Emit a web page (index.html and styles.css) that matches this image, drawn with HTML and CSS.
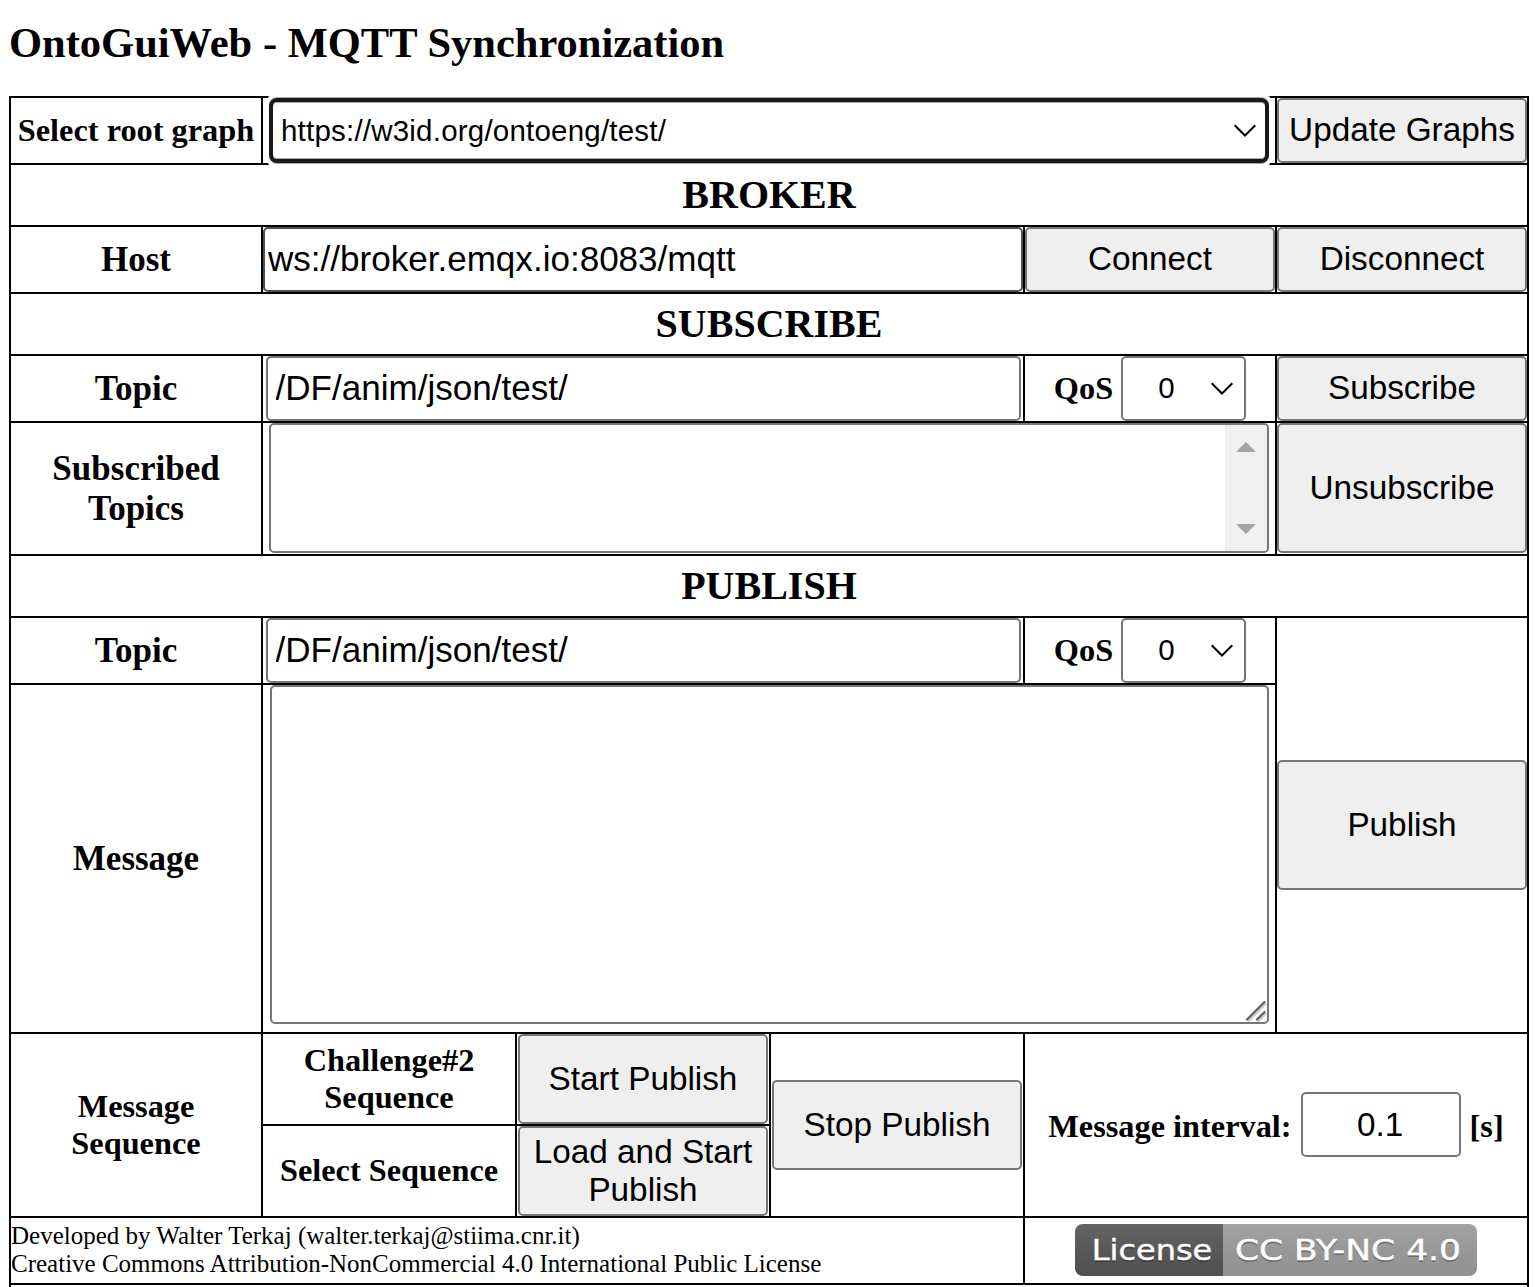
FILE: index.html
```html
<!DOCTYPE html>
<html lang="en">
<head>
<meta charset="utf-8">
<title>OntoGuiWeb - MQTT Synchronization</title>
<link rel="stylesheet" href="styles.css">
</head>
<body>
<h1 class="title"><span>OntoGuiWeb - MQTT Synchronization</span></h1>
<main class="panel">
  <div class="cell label small t-root">Select root graph</div>
  <div class="cell span4">
    <div class="focus-halo">
      <div class="select root-select">
        <span class="value">https://w3id.org/ontoeng/test/</span>
        <svg class="chevron" viewBox="0 0 24 14"><path d="M1.7 1.2 12 11.5 22.3 1.2"/></svg>
      </div>
    </div>
  </div>
  <div class="cell"><button class="btn">Update Graphs</button></div>

  <h2 class="cell section">BROKER</h2>

  <div class="cell label">Host</div>
  <div class="cell span3"><input class="field host" value="ws://broker.emqx.io:8083/mqtt"></div>
  <div class="cell"><button class="btn">Connect</button></div>
  <div class="cell"><button class="btn">Disconnect</button></div>

  <h2 class="cell section">SUBSCRIBE</h2>

  <div class="cell label">Topic</div>
  <div class="cell span3"><input class="field topic" value="/DF/anim/json/test/"></div>
  <div class="cell label small qos">QoS
    <div class="select qos-select"><span class="value">0</span>
      <svg class="chevron" viewBox="0 0 24 14"><path d="M1.7 1.2 12 11.5 22.3 1.2"/></svg>
    </div>
  </div>
  <div class="cell"><button class="btn">Subscribe</button></div>

  <div class="cell label">Subscribed<br>Topics</div>
  <div class="cell span4 top">
    <div class="listbox">
      <div class="scrollbar">
        <svg class="arrow" viewBox="0 0 20 10"><path d="M10 0 20 10H0z"/></svg>
        <svg class="arrow" viewBox="0 0 20 10"><path d="M0 0H20L10 10z"/></svg>
      </div>
    </div>
  </div>
  <div class="cell top"><button class="btn tall">Unsubscribe</button></div>

  <h2 class="cell section">PUBLISH</h2>

  <div class="cell label">Topic</div>
  <div class="cell span3"><input class="field topic" value="/DF/anim/json/test/"></div>
  <div class="cell label small qos">QoS
    <div class="select qos-select"><span class="value">0</span>
      <svg class="chevron" viewBox="0 0 24 14"><path d="M1.7 1.2 12 11.5 22.3 1.2"/></svg>
    </div>
  </div>
  <div class="cell rows2"><button class="btn tall">Publish</button></div>

  <div class="cell label">Message</div>
  <div class="cell span4 top">
    <div class="message-box">
      <textarea class="message"></textarea>
      <svg class="grip" viewBox="0 0 22 22"><path class="shade" d="M3.5 21 20.5 4M13.5 21 20.5 14"/><path d="M2 19.5 19.5 2M12 19.5 19.5 12"/></svg>
    </div>
  </div>

  <div class="cell label small rows2">Message<br>Sequence</div>
  <div class="cell label small">Challenge#2<br>Sequence</div>
  <div class="cell"><button class="btn medium">Start Publish</button></div>
  <div class="cell rows2"><button class="btn medium">Stop Publish</button></div>
  <div class="cell label small rows2 span2 interval">
    <span class="caption">Message interval:</span><input class="field seconds" value="0.1"><span class="caption">[s]</span>
  </div>
  <div class="cell label small last">Select Sequence</div>
  <div class="cell"><button class="btn medium">Load and Start<br>Publish</button></div>

  <div class="cell credits"><p>Developed by Walter Terkaj (walter.terkaj@stiima.cnr.it)<br>Creative Commons Attribution-NonCommercial 4.0 International Public License</p></div>
  <div class="cell span2 license">
    <svg class="badge" viewBox="0 0 402 52" role="img" aria-label="License: CC BY-NC 4.0">
      <defs>
        <linearGradient id="shine" x2="0" y2="1"><stop offset="0" stop-color="#bbb" stop-opacity=".13"/><stop offset="1" stop-opacity=".08"/></linearGradient>
        <clipPath id="round"><rect width="402" height="52" rx="8"/></clipPath>
      </defs>
      <g clip-path="url(#round)">
        <rect width="148" height="52" fill="#585858"/>
        <rect x="148" width="254" height="52" fill="#9f9f9f"/>
        <rect width="402" height="52" fill="url(#shine)"/>
      </g>
      <g class="badge-shadow">
        <text x="16.8" y="38" textLength="120.5" lengthAdjust="spacingAndGlyphs">License</text>
        <text x="160" y="38" textLength="226" lengthAdjust="spacingAndGlyphs">CC BY-NC 4.0</text>
      </g>
      <g class="badge-text">
        <text x="16.8" y="35.5" textLength="120.5" lengthAdjust="spacingAndGlyphs">License</text>
        <text x="160" y="35.5" textLength="226" lengthAdjust="spacingAndGlyphs">CC BY-NC 4.0</text>
      </g>
    </svg>
  </div>
  <div class="cell span6"></div>
</main>
</body>
</html>
```
FILE: styles.css
```css
* { box-sizing: border-box; }

body {
  margin: 0;
  height: 1287px;
  overflow: hidden;
  background: #fff;
  color: #000;
  font-family: "Liberation Serif", "Times New Roman", serif;
}

.title {
  margin: 0;
  height: 96px;
  padding: 19px 0 0 9px;
  font-size: 42.5px;
  line-height: 48px;
  white-space: nowrap;
}

/* The 2px gaps let the black background show through as cell rules. */
.panel {
  display: grid;
  grid-template-columns: 250px 252px 252px 252px 250px 250px;
  grid-template-rows: 65px 60px 65px 60px 65px 131px 60px 65px 347px 90px 90px 65px 40px;
  gap: 2px;
  width: 1520px;
  margin-left: 9px;
  padding: 2px;
  background: #000;
}

.cell {
  display: flex;
  align-items: center;
  justify-content: center;
  min-width: 0;
  min-height: 0;
  background: #fff;
}

.top { align-items: flex-start; }
.span2 { grid-column: span 2; }
.span3 { grid-column: span 3; }
.span4 { grid-column: span 4; }
.span6 { grid-column: span 6; }
.rows2 { grid-row: span 2; }

.label {
  font-size: 35px;
  font-weight: bold;
  line-height: 40px;
  text-align: center;
}
.small { font-size: 32.35px; line-height: 37px; }
.last { padding-bottom: 2px; }
.t-root { white-space: nowrap; }

.section {
  grid-column: span 6;
  margin: 0;
  font-size: 40px;
  line-height: 46px;
}

.btn {
  width: 250px;
  height: 65px;
  padding: 0 0 2px;
  border: 2px solid #767676;
  border-radius: 5px;
  background: #efefef;
  color: #000;
  font-family: "Liberation Sans", Arial, sans-serif;
  font-size: 33.3px;
  line-height: 38px;
  white-space: nowrap;
}
.tall { height: 130px; padding-bottom: 0; }
.medium { height: 90px; padding-bottom: 0; }

.field {
  height: 65px;
  border: 2px solid #767676;
  border-radius: 5px;
  background: #fff;
  color: #000;
  font-family: "Liberation Sans", Arial, sans-serif;
  font-size: 35.05px;
}
.host { width: 760px; padding: 0 3px 2px; border-color: #505050; }
.topic { width: 755px; margin-left: 1px; padding: 0 7.5px 2px; }

.select {
  display: flex;
  align-items: center;
  height: 65px;
  border: 2px solid #767676;
  border-radius: 5px;
  background: #fff;
  font-family: "Liberation Sans", Arial, sans-serif;
  font-size: 29.5px;
  font-weight: normal;
}
.focus-halo {
  flex: none;
  width: 1002px;
  margin: -2px 0;
  padding: 2px 1px;
  border-radius: 2px;
  background: #fff;
}
.root-select {
  justify-content: space-between;
  width: 1000px;
  padding: 0 8px 0 8px;
  border: 4px solid #191919;
  border-radius: 8px;
  box-shadow: inset 0 1px 0 #aaa, inset 0 -1px 0 #aaa, 0 1px 0 #aaa, 0 -1px 0 #aaa;
  letter-spacing: .21px;
}
.qos { gap: 8px; }
.qos-select { width: 125px; padding: 0 10px 0 35px; justify-content: space-between; }
.qos-select .value { padding-bottom: 2px; }

.chevron { width: 24px; height: 14px; fill: none; stroke: #000; stroke-width: 2; }

.listbox {
  display: flex;
  justify-content: flex-end;
  width: 1000px;
  height: 130px;
  border: 2px solid #767676;
  border-radius: 5px;
  overflow: hidden;
}
.scrollbar {
  display: flex;
  flex-direction: column;
  align-items: center;
  justify-content: space-between;
  width: 42px;
  padding: 17px 0 17px;
  background: #f0f0f0;
}
.arrow { width: 20px; height: 10px; fill: #a3a3a3; }

.message-box { position: relative; width: 999px; height: 339px; margin-left: 1px; }
.message {
  display: block;
  width: 100%;
  height: 100%;
  border: 2px solid #767676;
  border-radius: 5px;
  resize: none;
}
.grip {
  position: absolute;
  right: 2px;
  bottom: 2px;
  width: 22px;
  height: 22px;
  fill: none;
  stroke: #616161;
  stroke-width: 2.2;
  stroke-linecap: round;
}
.grip .shade { stroke: #ccc; }

.interval { gap: 9px; padding-bottom: 2px; white-space: nowrap; }
.interval .caption { padding-top: 4px; }
.seconds { width: 160px; padding: 2px 1px 0 0; font-size: 33.3px; text-align: center; }

.credits {
  grid-column: span 4;
  justify-content: flex-start;
  padding-bottom: 2px;
  font-size: 25px;
  line-height: 28px;
  white-space: nowrap;
}
.credits p { margin: 0; }

.license { padding-bottom: 2px; }
.badge { width: 402px; height: 52px; font-family: "DejaVu Sans", Verdana, sans-serif; font-size: 29px; }
.badge-shadow { fill: #010101; fill-opacity: .3; }
.badge-text { fill: #fff; stroke: #fff; stroke-width: .4; }
```
